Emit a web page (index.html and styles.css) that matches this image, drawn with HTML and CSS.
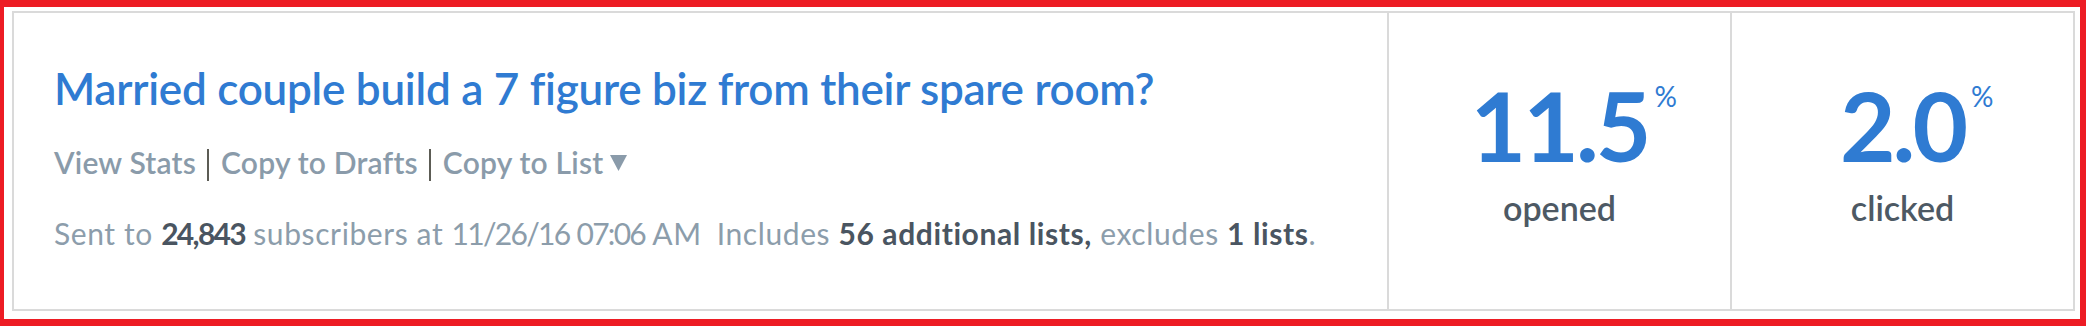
FILE: index.html
```html
<!DOCTYPE html>
<html lang="en">
<head>
<meta charset="utf-8">
<title>Campaign stats</title>
<link rel="stylesheet" href="styles.css">
</head>
<body>
<div class="frame">
  <div class="card">
    <div class="main">
      <h2 class="title">Married couple build a 7 figure biz from their spare room?</h2>
      <div class="links">
        <a class="link">View Stats</a><span class="sep"></span><a class="link">Copy to Drafts</a><span class="sep"></span><a class="link">Copy to List</a><svg class="caret" width="17" height="16" viewBox="0 0 17 16"><polygon points="0,0 17,0 8.5,16" fill="#8a9baa"/></svg>
      </div>
      <p class="meta">Sent to <b class="digits">24,843</b> subscribers at <span class="digits">11/26/16 07:06</span> AM<span class="gap"></span>Includes <b>56 additional lists,</b> excludes <b>1 lists</b>.</p>
    </div>
    <div class="stat">
      <div class="num">11.5<span class="pct">%</span></div>
      <div class="label">opened</div>
    </div>
    <div class="stat">
      <div class="num">2.0<span class="pct">%</span></div>
      <div class="label">clicked</div>
    </div>
  </div>
</div>
</body>
</html>
```

FILE: styles.css
```css
html, body {
  margin: 0;
  padding: 0;
}
body {
  background: #ed1c24;
  font-family: "Lato", "Noto Sans", sans-serif;
  width: 2086px;
  height: 326px;
  overflow: hidden;
}
.frame {
  margin: 7px 6px 0 4px;
  height: 312px;
  box-sizing: border-box;
  background: #ffffff;
  padding: 4px 5px 8px 8px;
}
.card {
  display: flex;
  height: 300px;
  box-sizing: border-box;
  border: 2px solid #dadada;
}
.main {
  flex: 1;
  padding: 53px 0 0 40px;
  min-width: 0;
}
.title {
  margin: 0;
  font-size: 44px;
  line-height: 44px;
  font-weight: 600;
  color: #2f7bd2;
  letter-spacing: -0.25px;
  white-space: nowrap;
}
.links {
  margin-top: 37px;
  height: 30px;
  display: flex;
  align-items: center;
  font-size: 30px;
  line-height: 30px;
  font-weight: 600;
  color: #8a9baa;
  letter-spacing: 0.2px;
  white-space: nowrap;
}
.link {
  color: #8a9baa;
}
.sep {
  display: inline-block;
  width: 2px;
  height: 32px;
  margin: 6px 12px 0 11px;
  background: #5c5c55;
}
.caret {
  margin-left: 7px;
  margin-top: 2px;
}
.meta {
  margin: 41px 0 0 0;
  font-size: 30px;
  line-height: 30px;
  color: #8c9dab;
  letter-spacing: 0.6px;
  white-space: nowrap;
}
.meta b {
  font-weight: 700;
  color: #4a5561;
}
.meta .digits {
  letter-spacing: -1.7px;
  word-spacing: 1px;
}
.gap {
  display: inline-block;
  width: 15px;
}
.stat {
  width: 341px;
  flex: none;
  border-left: 2px solid #dadada;
  display: flex;
  flex-direction: column;
  align-items: center;
  padding-top: 64px;
}
.num {
  position: relative;
  font-size: 96px;
  line-height: 96px;
  font-weight: 700;
  color: #2f7bd2;
  letter-spacing: -3px;
}
.pct {
  position: absolute;
  left: calc(100% + 6px);
  top: 5px;
  font-size: 28px;
  line-height: 28px;
  font-weight: 400;
  letter-spacing: 0;
}
.label {
  margin-top: 18px;
  font-size: 34px;
  line-height: 34px;
  font-weight: 600;
  color: #4d5964;
}
```
